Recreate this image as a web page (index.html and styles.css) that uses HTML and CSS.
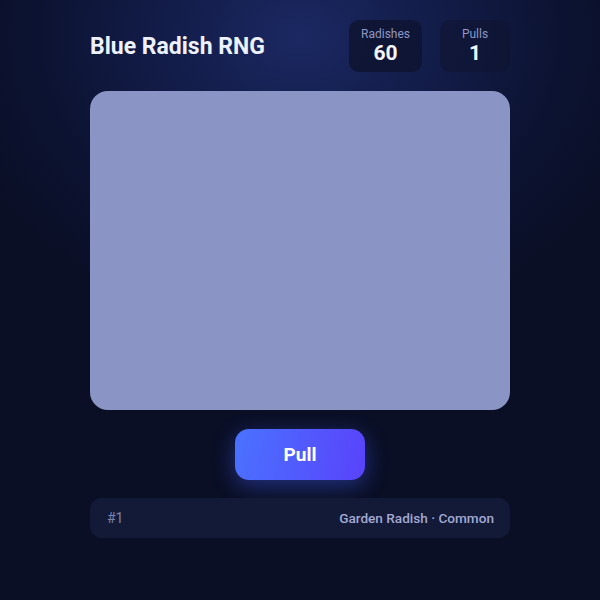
FILE: index.html
```html
<!DOCTYPE html>
<html lang="en">
<head>
<meta charset="utf-8">
<title>Blue Radish RNG</title>
<link rel="stylesheet" href="styles.css">
</head>
<body>
<main class="app">
  <header class="header">
    <h1 class="title">Blue Radish RNG</h1>
    <div class="stats">
      <div class="stat">
        <div class="stat-label">Radishes</div>
        <div class="stat-value">60</div>
      </div>
      <div class="stat stat-faint">
        <div class="stat-label">Pulls</div>
        <div class="stat-value">1</div>
      </div>
    </div>
  </header>
  <section class="card"></section>
  <div class="actions">
    <button class="pull">Pull</button>
  </div>
  <div class="history">
    <span class="history-num">#1</span>
    <span class="history-item">Garden Radish · Common</span>
  </div>
</main>
</body>
</html>
```

FILE: styles.css
```css
html, body {
  margin: 0;
  padding: 0;
  height: 100%;
}
body {
  font-family: Roboto, "Liberation Sans", sans-serif;
  color: #f2f4ff;
  background:
    radial-gradient(ellipse 62% 50% at 50% 6%, #1b2862 0%, #131d4a 35%, #0c1332 70%, rgba(10,15,36,0) 100%),
    #0a0f25;
  min-height: 600px;
}
.app {
  width: 420px;
  margin: 0 auto;
  padding-top: 20px;
  display: flex;
  flex-direction: column;
}
.header {
  display: flex;
  justify-content: space-between;
  align-items: center;
  height: 52px;
}
.title {
  margin: 0;
  font-size: 23px;
  font-weight: 700;
  color: #eef1ff;
  letter-spacing: 0;
}
.stats {
  display: flex;
  gap: 18px;
  align-self: stretch;
}
.stat {
  min-width: 70px;
  box-sizing: border-box;
  padding: 7px 12px 6px;
  border-radius: 10px;
  background: rgba(14, 20, 48, 0.85);
  display: flex;
  flex-direction: column;
  align-items: center;
}
.stat-faint {
  background: rgba(14, 20, 48, 0.55);
}
.stat-label {
  font-size: 12px;
  line-height: 14px;
  color: #8e97c4;
}
.stat-value {
  font-size: 21px;
  line-height: 24px;
  font-weight: 700;
  color: #f4f6ff;
}
.card {
  margin-top: 19px;
  height: 319px;
  border-radius: 18px;
  background: #8b95c5;
}
.actions {
  display: flex;
  justify-content: center;
  margin-top: 19px;
}
.pull {
  width: 130px;
  height: 51px;
  border: 0;
  border-radius: 14px;
  background: linear-gradient(100deg, #4a72ff 0%, #5943fb 100%);
  color: #ffffff;
  font-family: Roboto, "Liberation Sans", sans-serif;
  font-size: 19px;
  font-weight: 700;
  box-shadow: 0 6px 22px rgba(70, 95, 255, 0.42);
  cursor: pointer;
}
.history {
  margin-top: 18px;
  height: 40px;
  border-radius: 12px;
  background: #131a38;
  display: flex;
  justify-content: space-between;
  align-items: center;
  padding: 0 16px 0 17px;
  font-size: 14px;
}
.history-num {
  color: #7a83ab;
}
.history-item {
  color: #a2a9d2;
  font-weight: 500;
  font-size: 13.6px;
}
```
